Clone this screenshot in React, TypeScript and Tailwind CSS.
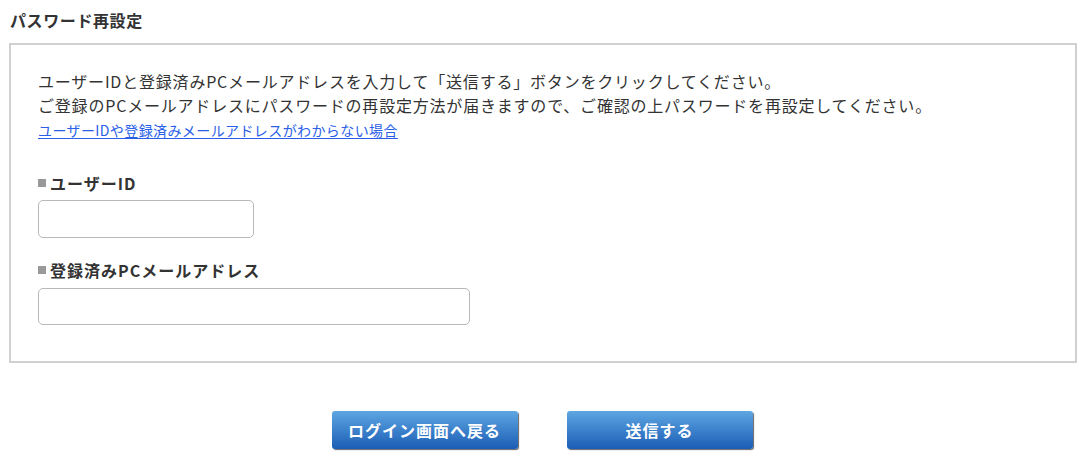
const FONT = {
  fontFamily: '"Noto Sans CJK JP", "Noto Sans", sans-serif',
};

export default function App() {
  return (
    <div className="w-[1092px] h-[472px] bg-white text-[#333]" style={FONT}>
      <div className="pl-[9px] pr-[15px] pt-[8px]">
        <h1 className="pl-[1px] text-[16px] leading-[24px] tracking-[0.6px] font-bold text-[#333]">パスワード再設定</h1>

        <div className="mt-[11px] h-[320px] border-2 border-[#d0d0d0] pl-[27px] pt-[24px]">
          <p className="text-[16px] leading-[24px] tracking-[0.8px] text-[#333]">
            ユーザーIDと登録済みPCメールアドレスを入力して「送信する」ボタンをクリックしてください。
          </p>
          <p className="text-[16px] leading-[24px] tracking-[0.8px] text-[#333]">
            ご登録のPCメールアドレスにパスワードの再設定方法が届きますので、ご確認の上パスワードを再設定してください。
          </p>
          <a href="#" className="block w-fit text-[14px] leading-[26px] tracking-[0.4px] text-[#2a5ee8] underline underline-offset-2">
            ユーザーIDや登録済みメールアドレスがわからない場合
          </a>

          <div className="mt-[28px] flex flex-col">
            <label className="flex items-center text-[16px] leading-[24px] tracking-[1px] font-bold text-[#333]">
              <span className="mr-[4px] inline-block w-[8px] h-[8px] bg-[#999]" />
              ユーザーID
            </label>
            <input className="mt-[5px] w-[216px] h-[38px] rounded-[5px] border border-[#b8b8b8] bg-white" />

            <label className="mt-[20px] flex items-center text-[16px] leading-[24px] tracking-[1px] font-bold text-[#333]">
              <span className="mr-[4px] inline-block w-[8px] h-[8px] bg-[#999]" />
              登録済みPCメールアドレス
            </label>
            <input className="mt-[6px] w-[432px] h-[37px] rounded-[5px] border border-[#b8b8b8] bg-white" />
          </div>
        </div>

        <div className="mt-[48px] flex justify-center gap-[49px] pr-[2px]">
          <button className="w-[186px] h-[38px] rounded-[3px] bg-gradient-to-b from-[#5ea6e2] to-[#1b5db5] text-white text-[16px] tracking-[1px] font-bold shadow-[1px_1px_1px_rgba(0,0,0,0.6)]">
            ログイン画面へ戻る
          </button>
          <button className="w-[186px] h-[38px] rounded-[3px] bg-gradient-to-b from-[#5ea6e2] to-[#1b5db5] text-white text-[16px] tracking-[1px] font-bold shadow-[1px_1px_1px_rgba(0,0,0,0.6)]">
            送信する
          </button>
        </div>
      </div>
    </div>
  );
}
